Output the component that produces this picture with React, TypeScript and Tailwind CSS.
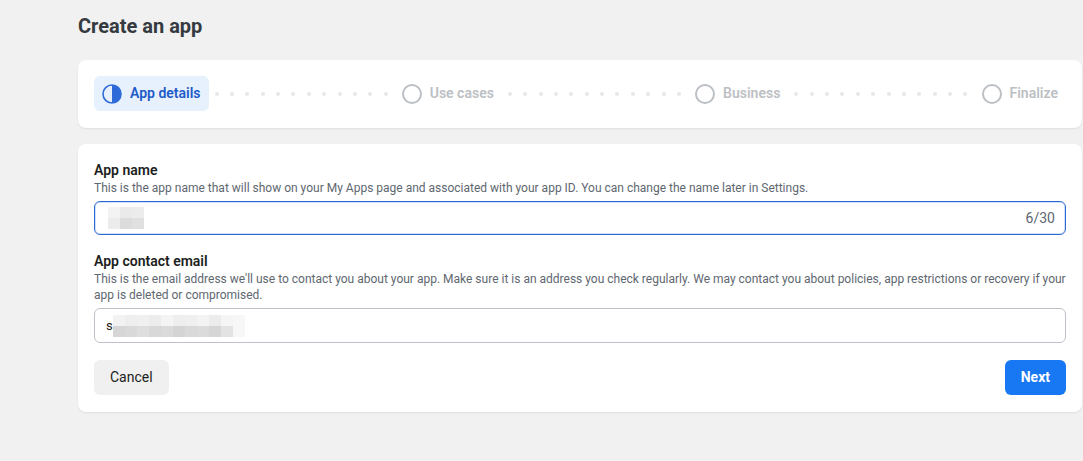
import React from 'react';

const font = { fontFamily: 'Roboto, "Liberation Sans", Arial, sans-serif' };

function Dots() {
  return (
    <div className="flex-1 flex items-center justify-between px-[6px]">
      {Array.from({ length: 12 }).map((_, i) => (
        <span key={i} className="w-[4px] h-[4px] rounded-full bg-[#e6e8eb]" />
      ))}
    </div>
  );
}

function Step({ label }: { label: string }) {
  return (
    <div className="flex items-center gap-2 px-2 h-[35px]">
      <span className="w-[20px] h-[20px] rounded-full border-2 border-[#bcc0c4]" />
      <span className="text-[14px] font-semibold text-[#bcc0c4]">{label}</span>
    </div>
  );
}

function Redacted({ cells }: { cells: string[][] }) {
  return (
    <div className="flex flex-col">
      {cells.map((row, r) => (
        <div key={r} className="flex">
          {row.map((c, i) => (
            <span key={i} className="w-[12px] h-[11px]" style={{ background: c }} />
          ))}
        </div>
      ))}
    </div>
  );
}

export default function App() {
  return (
    <div className="min-h-screen bg-[#f1f1f1] pl-[78px] pr-px pb-12" style={font}>
      <h1 className="h-[60px] pt-[14px] text-[20px] leading-[24px] font-bold text-[#343a40]">
        Create an app
      </h1>

      {/* Stepper */}
      <div className="h-[68px] bg-white rounded-lg shadow-[0_1px_2px_rgba(0,0,0,0.08)] flex items-center pl-4 pr-4 pb-px">
        <div className="flex items-center gap-2 px-2 h-[35px] rounded-md bg-[#e7f0fd]">
          <svg width="20" height="20" viewBox="0 0 20 20">
            <circle cx="10" cy="10" r="9" fill="none" stroke="#2e6bd8" strokeWidth="1.6" />
            <path d="M10 1 A9 9 0 0 1 10 19 Z" fill="#2e6bd8" />
          </svg>
          <span className="text-[14px] font-semibold text-[#1d5bc8]">App details</span>
        </div>
        <Dots />
        <Step label="Use cases" />
        <Dots />
        <Step label="Business" />
        <Dots />
        <Step label="Finalize" />
      </div>

      {/* Form */}
      <div className="mt-4 bg-white rounded-lg shadow-[0_1px_2px_rgba(0,0,0,0.08)] px-4 pt-4 pb-[17px]">
        <div className="text-[14px] leading-[20px] font-semibold text-[#1c1e21]">App name</div>
        <div className="text-[12px] leading-[16px] text-[#606770]">
          This is the app name that will show on your My Apps page and associated with your app ID. You can change the name later in Settings.
        </div>
        <div className="mt-[5px] h-[34px] rounded-md border border-[#2d6bd2] shadow-[inset_0_0_0_1px_#cfe0fb] flex items-center pl-[13px] pr-[10px]">
          <Redacted
            cells={[
              ['#f3f3f3', '#eaeaea', '#ececec'],
              ['#ececec', '#dcdcdc', '#e0e0e0'],
            ]}
          />
          <span className="ml-auto text-[14px] text-[#606770]">6/30</span>
        </div>

        <div className="mt-4 text-[14px] leading-[20px] font-semibold text-[#1c1e21]">App contact email</div>
        <div className="text-[12px] leading-[16px] text-[#606770]">
          This is the email address we'll use to contact you about your app. Make sure it is an address you check regularly. We may contact you about policies, app restrictions or recovery if your app is deleted or compromised.
        </div>
        <div className="mt-[5px] h-[35px] rounded-md border border-[#bec3c9] flex items-center pl-[11px]">
          <span className="text-[13px] text-[#1c1e21]">s</span>
          <Redacted
            cells={[
              ['#f2f2f2', '#eeeeee', '#f0f0f0', '#ececec', '#f4f4f4', '#eeeeee', '#efefef', '#f3f3f3', '#ececec', '#f5f5f5', '#f7f7f7'],
              ['#d6d6d6', '#d9d9d9', '#dedede', '#d8d8d8', '#dadada', '#d4d4d4', '#d9d9d9', '#dbdbdb', '#d6d6d6', '#e3e3e3', '#f7f7f7'],
            ]}
          />
        </div>

        <div className="mt-[17px] flex items-center justify-between">
          <button className="h-[35px] px-4 rounded-md bg-[#f0f0f0] text-[14px] text-[#1c1e21]">
            Cancel
          </button>
          <button className="h-[35px] px-4 rounded-md bg-[#1877f2] text-[14px] font-bold text-white">
            Next
          </button>
        </div>
      </div>
    </div>
  );
}
